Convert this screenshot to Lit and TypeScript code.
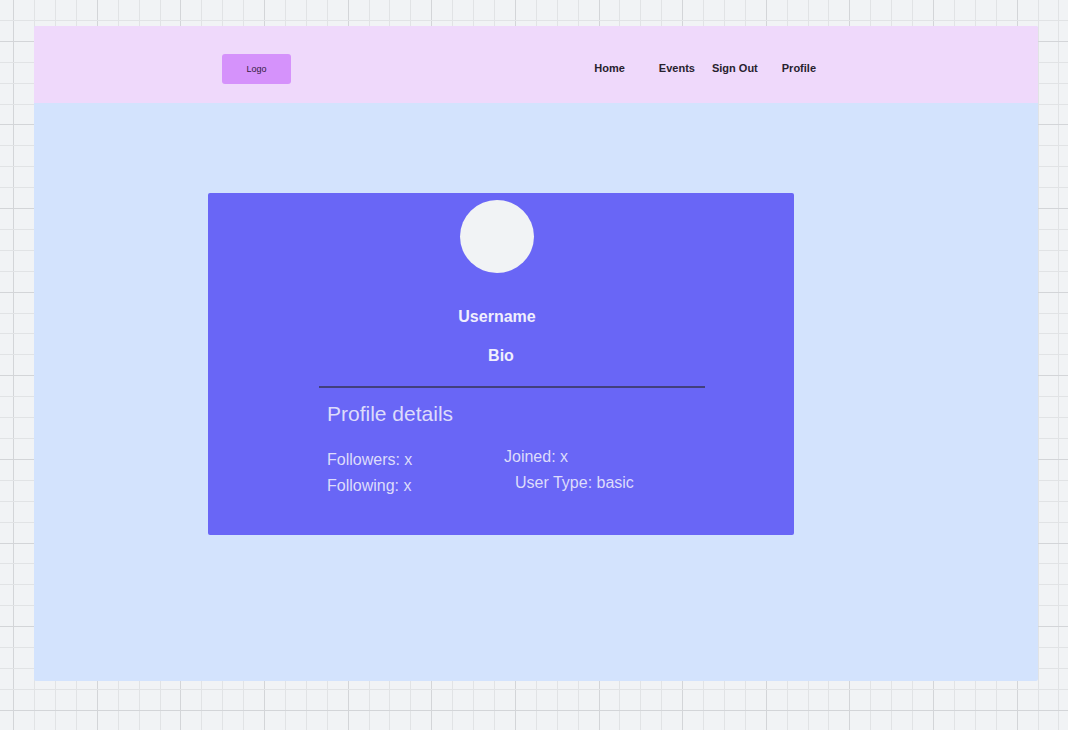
import { LitElement, html, svg, css } from "lit";
import { customElement } from "lit/decorators.js";

const STEP = 20.905;

/** Pixel-snapped grid line positions; every fourth one is a major line. */
function gridLines(start: number, firstMajor: number, extent: number) {
  const lines: { at: number; major: boolean }[] = [];
  for (let k = 0; start + k * STEP < extent; k++) {
    lines.push({ at: Math.floor(start + k * STEP), major: k % 4 === firstMajor });
  }
  return lines.sort((a, b) => Number(a.major) - Number(b.major));
}

@customElement("canvas-grid")
class CanvasGrid extends LitElement {
  static styles = css`
    :host { display: block; }
    .grid { display: block; width: 100%; height: 100%; }
    .minor { fill: #e1e3e5; }
    .major { fill: #d3d5d8; }
  `;

  render() {
    const name = (major: boolean) => (major ? "major" : "minor");
    return html`<svg class="grid" aria-hidden="true">
      ${gridLines(13.7, 0, 4000).map((l) => svg`<rect class=${name(l.major)} x=${l.at} y="0" width="1" height="100%"></rect>`)}
      ${gridLines(20.4, 1, 3000).map((l) => svg`<rect class=${name(l.major)} x="0" y=${l.at} width="100%" height="1"></rect>`)}
    </svg>`;
  }
}

@customElement("site-header")
class SiteHeader extends LitElement {
  static styles = css`
    :host {
      display: grid;
      grid-template-columns: 188fr 594fr 222fr;
      background: #efd9fb;
      padding: 28px 0 19px;
      border-radius: 2px 2px 0 0;
    }
    .bar {
      grid-column: 2;
      display: flex;
      justify-content: space-between;
      align-items: center;
    }
    .logo {
      width: 69px;
      height: 30px;
      padding: 0;
      border: 0;
      border-radius: 3px;
      background: #d592fb;
      color: #33203f;
      font: 9px/12px "Liberation Sans", Arial, sans-serif;
    }
    .links { display: flex; padding-bottom: 2px; }
    .link {
      color: #28222e;
      font-size: 11px;
      font-weight: 700;
      line-height: 14px;
      text-decoration: none;
      white-space: nowrap;
    }
    .wide { margin-right: 34px; }
    .tight { margin-right: 17px; }
    .medium { margin-right: 24px; }
  `;

  render() {
    return html`
      <div class="bar">
        <button class="logo" type="button">Logo</button>
        <nav class="links">
          <a class="link wide" href="#home">Home</a>
          <a class="link tight" href="#events">Events</a>
          <a class="link medium" href="#sign-out">Sign Out</a>
          <a class="link" href="#profile">Profile</a>
        </nav>
      </div>
    `;
  }
}

@customElement("profile-card")
class ProfileCard extends LitElement {
  static styles = css`
    :host {
      display: block;
      background: #6966f6;
      border-radius: 2px;
      padding: 7px 0 39px;
      color: #dddcfb;
      font-size: 16px;
      line-height: 20px;
    }
    .identity {
      display: flex;
      flex-direction: column;
      align-items: center;
      gap: 34px;
      padding-right: 8px;
    }
    .avatar {
      width: 74px;
      height: 73px;
      border-radius: 50%;
      background: #f1f3f5;
    }
    .name, .bio {
      margin: 0;
      color: #f0effd;
      font-size: 16px;
      font-weight: 700;
      line-height: 20px;
      text-align: center;
    }
    .bio { margin-top: 19px; }
    .details {
      display: grid;
      grid-template-columns: 111fr 386fr 89fr;
      margin-top: 20px;
    }
    .body { grid-column: 2; }
    .rule { margin: 0; border: 0; height: 2px; background: #42407c; }
    .title {
      margin: 14px 0 0 8px;
      font-size: 21px;
      font-weight: 400;
      line-height: 24px;
    }
    .facts {
      display: grid;
      grid-template-columns: 177fr 201fr;
      margin: 21px 0 0 8px;
    }
    .column {
      display: flex;
      flex-direction: column;
      gap: 6px;
      margin: 0;
      padding: 0;
      list-style: none;
      white-space: nowrap;
    }
    .social { padding-top: 3px; }
    .indented { padding-left: 11px; }
  `;

  render() {
    return html`
      <div class="identity">
        <div class="avatar"></div>
        <h1 class="name">Username</h1>
      </div>
      <p class="bio">Bio</p>
      <section class="details">
        <div class="body">
          <hr class="rule" />
          <h2 class="title">Profile details</h2>
          <div class="facts">
            <ul class="column social">
              <li>Followers: x</li>
              <li>Following: x</li>
            </ul>
            <ul class="column">
              <li>Joined: x</li>
              <li class="indented">User Type: basic</li>
            </ul>
          </div>
        </div>
      </section>
    `;
  }
}

@customElement("app-root")
class AppRoot extends LitElement {
  static styles = css`
    :host {
      display: grid;
      box-sizing: border-box;
      min-height: 100vh;
      background: #f1f3f5;
      font-family: "Liberation Sans", Arial, sans-serif;
    }
    .backdrop {
      grid-area: 1 / 1;
      min-height: 0;
      height: 100%;
      contain: size;
    }
    .frame {
      grid-area: 1 / 1;
      z-index: 1;
      display: flex;
      flex-direction: column;
      margin: 26px 30px 49px 34px;
      border-radius: 2px;
      background: #d3e3fd;
    }
    .content {
      display: grid;
      grid-template-columns: 174fr 586fr 244fr;
      padding: 90px 0;
    }
    .card { grid-column: 2; }
  `;

  render() {
    return html`
      <canvas-grid class="backdrop"></canvas-grid>
      <div class="frame">
        <site-header></site-header>
        <main class="content">
          <profile-card class="card"></profile-card>
        </main>
      </div>
    `;
  }
}
